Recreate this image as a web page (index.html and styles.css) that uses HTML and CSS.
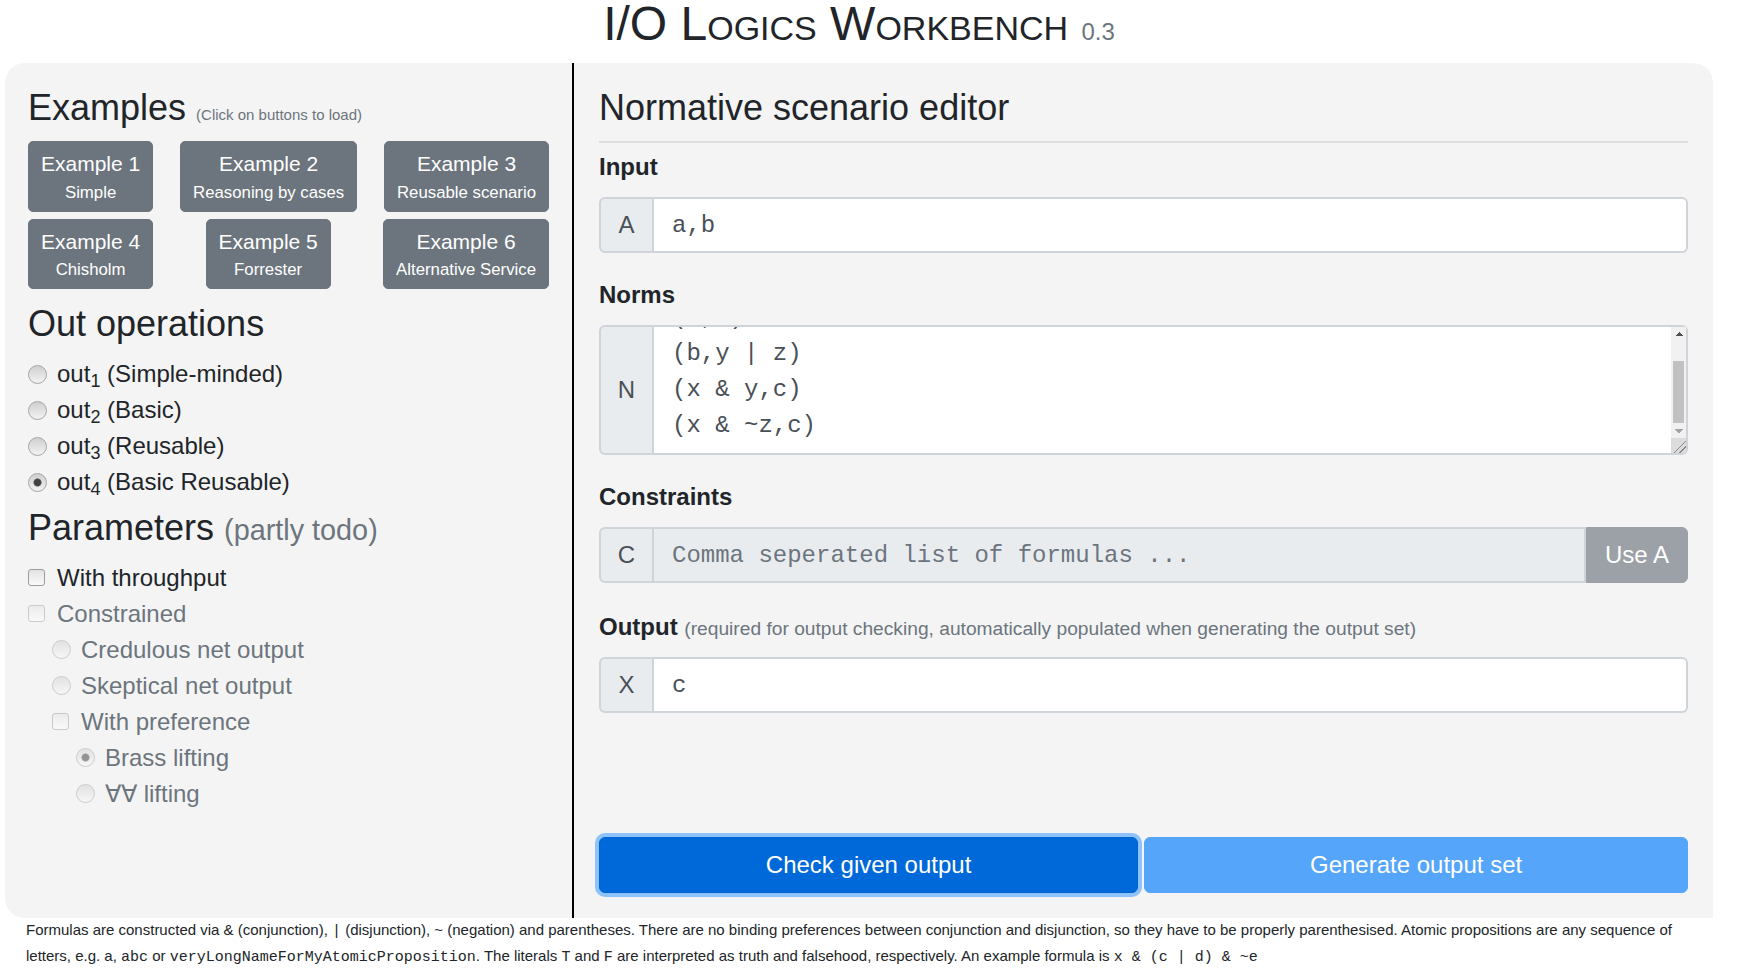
FILE: index.html
```html
<!DOCTYPE html>
<html lang="en">
<head>
<meta charset="utf-8">
<title>I/O Logics Workbench</title>
<link rel="stylesheet" href="styles.css">
</head>
<body>
<div class="page">
  <h1 class="title">I/O Logics Workbench <small class="version">0.3</small></h1>
  <div class="panels">
    <section class="left">
      <h2 class="heading">Examples <small class="hint">(Click on buttons to load)</small></h2>
      <div class="examples">
        <div class="ex-row">
          <button class="ex-btn"><span class="main">Example 1</span><span class="sub">Simple</span></button>
          <button class="ex-btn"><span class="main">Example 2</span><span class="sub">Reasoning by cases</span></button>
          <button class="ex-btn"><span class="main">Example 3</span><span class="sub">Reusable scenario</span></button>
        </div>
        <div class="ex-row">
          <button class="ex-btn"><span class="main">Example 4</span><span class="sub">Chisholm</span></button>
          <button class="ex-btn"><span class="main">Example 5</span><span class="sub">Forrester</span></button>
          <button class="ex-btn"><span class="main">Example 6</span><span class="sub">Alternative Service</span></button>
        </div>
      </div>
      <h2 class="heading ops-title">Out operations</h2>
      <ul class="opts">
        <li><label class="opt"><input class="radio" type="radio" name="op"><span>out<sub>1</sub> (Simple-minded)</span></label></li>
        <li><label class="opt"><input class="radio" type="radio" name="op"><span>out<sub>2</sub> (Basic)</span></label></li>
        <li><label class="opt"><input class="radio" type="radio" name="op"><span>out<sub>3</sub> (Reusable)</span></label></li>
        <li><label class="opt"><input class="radio" type="radio" name="op" checked><span>out<sub>4</sub> (Basic Reusable)</span></label></li>
      </ul>
      <h2 class="heading params">Parameters <small class="soft">(partly todo)</small></h2>
      <ul class="opts">
        <li><label class="opt"><input class="check" type="checkbox"><span>With throughput</span></label></li>
        <li><label class="opt off"><input class="check" type="checkbox" disabled><span>Constrained</span></label></li>
        <li><label class="opt off lvl1"><input class="radio" type="radio" name="net" disabled><span>Credulous net output</span></label></li>
        <li><label class="opt off lvl1"><input class="radio" type="radio" name="net" disabled><span>Skeptical net output</span></label></li>
        <li><label class="opt off lvl1"><input class="check" type="checkbox" disabled><span>With preference</span></label></li>
        <li><label class="opt off lvl2"><input class="radio" type="radio" name="lift" disabled checked><span>Brass lifting</span></label></li>
        <li><label class="opt off lvl2"><input class="radio" type="radio" name="lift" disabled><span>∀∀ lifting</span></label></li>
      </ul>
    </section>
    <section class="right">
      <h2 class="heading editor-title">Normative scenario editor</h2>
      <hr class="rule">
      <label class="label">Input</label>
      <div class="group">
        <span class="addon">A</span>
        <input class="field" type="text" value="a,b">
      </div>
      <label class="label">Norms</label>
      <div class="group">
        <span class="addon">N</span>
        <div class="area-wrap">
          <textarea class="field area" id="norms">(a,x)
(b,y | z)
(x &amp; y,c)
(x &amp; ~z,c)</textarea>
          <div class="vscroll" aria-hidden="true">
            <span class="sb-btn sb-up"></span>
            <span class="sb-track"><span class="sb-thumb"></span></span>
            <span class="sb-btn sb-down"></span>
          </div>
        </div>
      </div>
      <label class="label">Constraints</label>
      <div class="group group-constraints">
        <span class="addon">C</span>
        <input class="field locked" type="text" placeholder="Comma seperated list of formulas ..." disabled>
        <button class="use-btn" disabled>Use A</button>
      </div>
      <label class="label">Output <small class="soft">(required for output checking, automatically populated when generating the output set)</small></label>
      <div class="group">
        <span class="addon">X</span>
        <input class="field" type="text" value="c">
      </div>
      <div class="actions">
        <button class="act act-check">Check given output</button>
        <button class="act act-gen" disabled>Generate output set</button>
      </div>
    </section>
  </div>
  <p class="notes">Formulas are constructed via &amp; (conjunction), <code>|</code> (disjunction), ~ (negation) and parentheses. There are no binding preferences between conjunction and disjunction, so they have to be properly parenthesised. Atomic propositions are any sequence of letters, e.g. a, <code>abc</code> or <code>veryLongNameForMyAtomicProposition</code>. The literals <code>T</code> and <code>F</code> are interpreted as truth and falsehood, respectively. An example formula is <code>x &amp; (c | d) &amp; ~e</code></p>
</div>
<div class="band"></div>
<script src="script.js"></script>
</body>
</html>
```

FILE: styles.css
```css
* { box-sizing: border-box; }
html, body { margin: 0; }
body {
  font-family: "Liberation Sans", Arial, sans-serif;
  color: #212529;
  background: #fff;
  overflow: hidden;
}
.page { width: 1708px; margin-left: 5px; }
.title {
  margin: 0 0 15px;
  height: 48px;
  font-size: 48px;
  line-height: 1;
  font-weight: 400;
  text-align: center;
  font-variant: small-caps;
}
.version { font-size: 24px; color: #6c757d; font-variant: normal; }

.panels { display: flex; height: 855px; }
.left {
  width: 569px;
  flex: none;
  background: #f4f4f4;
  border-right: 2px solid #000;
  border-radius: 20px 0 0 20px;
  padding: 23px 23px 25px;
}
.right {
  flex: 1;
  min-width: 0;
  background: #f4f4f4;
  border-radius: 0 20px 0 0;
  padding: 23px 25px 25px;
  display: flex;
  flex-direction: column;
}

.heading {
  margin: 0 0 10px;
  font-size: 36px;
  line-height: 1.2;
  font-weight: 400;
}
.left > .heading:first-child { margin-bottom: 12px; }
.ops-title { margin-bottom: 11px; }
.hint { font-size: 15px; color: #6c757d; }
.soft { font-size: 80%; font-weight: 400; color: #6c757d; }

.examples { display: flex; flex-direction: column; gap: 7px; margin-bottom: 13px; }
.ex-row { display: flex; justify-content: space-between; }
.ex-btn {
  background: #6c757d;
  border: 1px solid #6c757d;
  color: #fff;
  border-radius: 5px;
  padding: 6px 12px;
  font-family: inherit;
  font-size: 21px;
  line-height: 1.5;
  text-align: center;
}
.ex-btn .main, .ex-btn .sub { display: block; }
.ex-btn .sub { font-size: 16.8px; line-height: 25px; }

.opts { list-style: none; margin: 0 0 6px; padding: 0; font-size: 24px; line-height: 1.5; }
.opt { display: flex; align-items: center; height: 36px; }
.opt.off { color: #6c757d; }
.lvl1 { padding-left: 24px; }
.lvl2 { padding-left: 48px; }
sub { font-size: 75%; line-height: 0; position: relative; bottom: -0.25em; vertical-align: baseline; }

.radio, .check {
  -webkit-appearance: none;
  appearance: none;
  flex: none;
  margin: 0 10px 0 0;
}
.radio {
  width: 19px;
  height: 19px;
  border-radius: 50%;
  border: 1px solid #a6a6a6;
  background: linear-gradient(#cfcfcf, #f3f3f3);
}
.radio:checked {
  background: radial-gradient(circle, #404040 0 3px, #6a6a6a 3.7px, transparent 4.5px), linear-gradient(#cfcfcf, #f3f3f3);
}
.radio:disabled { border-color: #cccccc; background: linear-gradient(#e2e2e2, #f6f6f6); }
.radio:disabled:checked {
  background: radial-gradient(circle, #939393 0 3px, #ababab 3.7px, transparent 4.5px), linear-gradient(#e2e2e2, #f6f6f6);
}
.check {
  width: 17px;
  height: 17px;
  margin-right: 12px;
  border-radius: 3px;
  border: 1px solid #9d9d9d;
  background: linear-gradient(#e2e2e2, #fafafa);
}
.check:disabled { border-color: #cbcbcb; background: linear-gradient(#ebebeb, #f9f9f9); }

.editor-title { margin-bottom: 12px; }
.rule { margin: 0 0 6px; border: 0; border-top: 2px solid #dedede; }
.label {
  display: block;
  margin: 0 0 12px;
  font-size: 24px;
  line-height: 1.5;
  font-weight: 700;
}
.group { display: flex; margin-bottom: 24px; }
.group-constraints { margin-bottom: 26px; }
.addon {
  width: 55px;
  flex: none;
  display: flex;
  align-items: center;
  justify-content: center;
  background: #e9ecef;
  border: 2px solid #ced4da;
  border-radius: 6px 0 0 6px;
  font-size: 24px;
  color: #495057;
}
.field {
  flex: 1;
  min-width: 0;
  height: 56px;
  margin: 0;
  border: 2px solid #ced4da;
  border-left: 0;
  border-radius: 0 6px 6px 0;
  padding: 8px 18px;
  font-family: "Liberation Mono", "Courier New", monospace;
  font-size: 24px;
  line-height: 1.5;
  color: #495057;
  background: #fff;
  outline: none;
}
.area-wrap { flex: 1; min-width: 0; display: flex; position: relative; }
.area {
  height: 130px;
  resize: vertical;
  overflow-y: scroll;
  white-space: pre;
  padding: 9px 18px 9px;
}
.area::-webkit-resizer {
  background: linear-gradient(135deg, transparent 0 58%, #8a8a8a 58% 63%, transparent 63% 76%, #8a8a8a 76% 81%, transparent 81%), #dcdcdc;
}
.vscroll {
  position: absolute;
  top: 2px;
  right: 2px;
  bottom: 17px;
  width: 15px;
  display: flex;
  flex-direction: column;
  background: #f1f1f1;
}
.sb-btn { flex: none; height: 15px; }
.sb-up {
  background: conic-gradient(from 135deg at 50% 0, #505050 0 90deg, transparent 0) 50% 5px / 8px 4px no-repeat;
}
.sb-down {
  background: conic-gradient(from -45deg at 50% 100%, #a3a3a3 0 90deg, transparent 0) 50% 6px / 8px 4px no-repeat;
}
.sb-track {
  flex: 1;
  display: flex;
  flex-direction: column;
  justify-content: flex-end;
  padding: 0 2px;
}
.sb-thumb { height: 62px; background: #c1c1c1; }

.locked { background: #e9ecef; border-radius: 0; }
.locked::placeholder { color: #6c757d; opacity: 1; }
.use-btn {
  flex: none;
  border: 1px solid #9ca1a7;
  background: #9ca1a7;
  color: #fff;
  border-radius: 0 6px 6px 0;
  padding: 0 18px;
  font-family: inherit;
  font-size: 24px;
}

.actions { margin-top: auto; display: flex; gap: 6px; }
.act {
  height: 56px;
  border-radius: 6px;
  font-family: inherit;
  font-size: 24px;
  color: #fff;
  padding: 0 18px;
}
.act-check {
  flex: 539 1 0;
  background: #0069d9;
  border: 1px solid #0062cc;
  box-shadow: 0 0 0 4px rgba(38, 143, 255, 0.5);
}
.act-gen {
  flex: 544 1 0;
  background: #55a5fb;
  border: 1px solid #55a5fb;
}

.notes {
  margin: 0;
  padding: 0 20px 0 21px;
  font-size: 15px;
  line-height: 24px;
}
.notes code { font-family: "Liberation Mono", "Courier New", monospace; font-size: 15px; color: #212529; }
.band { height: 30px; margin-top: 5px; background: #f1f1f1; }
```

FILE: script.js
```js
var norms = document.getElementById('norms');
norms.scrollTop = norms.scrollHeight;
```
